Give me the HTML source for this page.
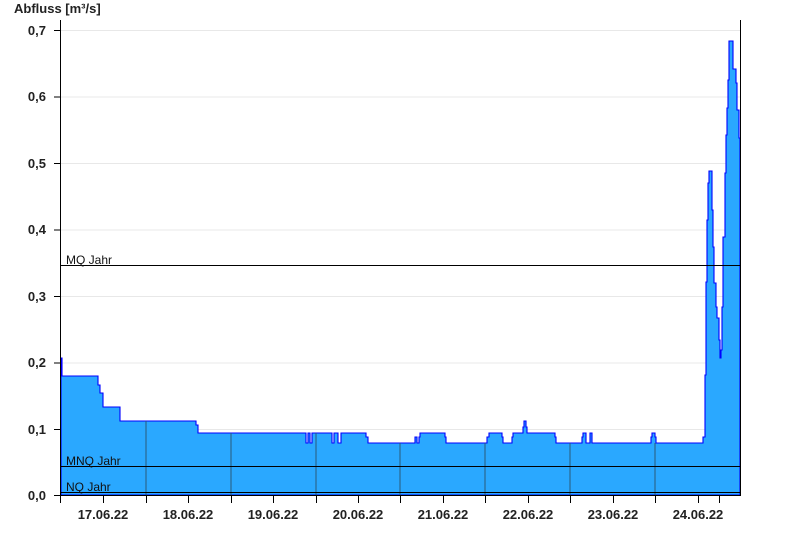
<!DOCTYPE html>
<html><head><meta charset="utf-8"><style>
html,body{margin:0;padding:0;background:#fff;width:800px;height:550px;overflow:hidden}
svg{display:block}
text{font-family:"Liberation Sans",Arial,sans-serif}
</style></head><body>
<svg width="800" height="550" viewBox="0 0 800 550">
<g stroke="#e8e8e8" stroke-width="1">
<line x1="61" y1="30.5" x2="740" y2="30.5"/>
<line x1="61" y1="97" x2="740" y2="97"/>
<line x1="61" y1="163.5" x2="740" y2="163.5"/>
<line x1="61" y1="230" x2="740" y2="230"/>
<line x1="61" y1="296.5" x2="740" y2="296.5"/>
<line x1="61" y1="363" x2="740" y2="363"/>
<line x1="61" y1="429.5" x2="740" y2="429.5"/>
</g>
<path fill="#2aa8ff" stroke="#0000ff" stroke-width="1.1" stroke-linejoin="miter" d="M61,495 L61,358 L62,358 L62,376 L98,376 L98,385 L100,385 L100,393 L103,393 L103,407 L120,407 L120,421 L196,421 L196,425 L198,425 L198,433 L306,433 L306,443 L308,443 L308,433 L310,433 L310,443 L312,443 L312,433 L332,433 L332,443 L334,443 L334,433 L338,433 L338,443 L341,443 L341,433 L343,433 L343,433 L366,433 L366,437 L368,437 L368,443 L415,443 L415,437 L417,437 L417,443 L419,443 L419,437 L420,437 L420,433 L445,433 L445,437 L446,437 L446,443 L487,443 L487,437 L489,437 L489,433 L502,433 L502,437 L503,437 L503,443 L512,443 L512,437 L513,437 L513,433 L523,433 L523,427 L524,427 L524,421 L526,421 L526,427 L527,427 L527,433 L555,433 L555,437 L556,437 L556,443 L582,443 L582,437 L583,437 L583,433 L586,433 L586,443 L590,443 L590,433 L592,433 L592,443 L651,443 L651,437 L652,437 L652,433 L655,433 L655,437 L656,437 L656,443 L703,443 L703,437 L705,437 L705,375 L706,375 L706,282 L707,282 L707,220 L708,220 L708,183 L709,183 L709,171 L712,171 L712,210 L713,210 L713,247 L714,247 L714,283 L716,283 L716,307 L717,307 L717,318 L719,318 L719,340 L720,340 L720,358 L721,358 L721,350 L722,350 L722,307 L723,307 L723,237 L725,237 L725,173 L726,173 L726,135 L727,135 L727,108 L728,108 L728,80 L729,80 L729,41 L733,41 L733,69 L736,69 L736,83 L737,83 L737,110 L739,110 L739,138 L740,138 L740,495 Z"/>
<g stroke="#2a5a7a" stroke-width="1">
<line x1="146" y1="421" x2="146" y2="495"/>
<line x1="231" y1="433" x2="231" y2="495"/>
<line x1="316" y1="433" x2="316" y2="495"/>
<line x1="400" y1="443" x2="400" y2="495"/>
<line x1="485" y1="443" x2="485" y2="495"/>
<line x1="570" y1="443" x2="570" y2="495"/>
<line x1="655" y1="443" x2="655" y2="495"/>
</g>
<g stroke="#000" stroke-width="1">
<line x1="61" y1="265.5" x2="740" y2="265.5"/>
<line x1="61" y1="466.5" x2="740" y2="466.5"/>
<line x1="61" y1="492.5" x2="740" y2="492.5"/>
<line x1="60.5" y1="20" x2="60.5" y2="503"/>
<line x1="740.5" y1="20" x2="740.5" y2="495"/>
<line x1="54" y1="495.5" x2="741" y2="495.5"/>
</g>
<g stroke="#000" stroke-width="1">
<line x1="54" y1="30.5" x2="60" y2="30.5"/><line x1="54" y1="97" x2="60" y2="97"/><line x1="54" y1="163.5" x2="60" y2="163.5"/><line x1="54" y1="230" x2="60" y2="230"/><line x1="54" y1="296.5" x2="60" y2="296.5"/><line x1="54" y1="363" x2="60" y2="363"/><line x1="54" y1="429.5" x2="60" y2="429.5"/>
<line x1="103.5" y1="496" x2="103.5" y2="503"/><line x1="146.5" y1="496" x2="146.5" y2="503"/><line x1="188.5" y1="496" x2="188.5" y2="503"/><line x1="231.5" y1="496" x2="231.5" y2="503"/><line x1="273.5" y1="496" x2="273.5" y2="503"/><line x1="316.5" y1="496" x2="316.5" y2="503"/><line x1="358.5" y1="496" x2="358.5" y2="503"/><line x1="400.5" y1="496" x2="400.5" y2="503"/><line x1="443.5" y1="496" x2="443.5" y2="503"/><line x1="485.5" y1="496" x2="485.5" y2="503"/><line x1="528.5" y1="496" x2="528.5" y2="503"/><line x1="570.5" y1="496" x2="570.5" y2="503"/><line x1="613.5" y1="496" x2="613.5" y2="503"/><line x1="655.5" y1="496" x2="655.5" y2="503"/><line x1="698.5" y1="496" x2="698.5" y2="503"/><line x1="719.5" y1="496" x2="719.5" y2="503"/>
</g>
<g font-size="13" font-weight="bold" fill="#222" text-anchor="end">
<text x="46" y="35">0,7</text><text x="46" y="101">0,6</text><text x="46" y="168">0,5</text><text x="46" y="234">0,4</text><text x="46" y="301">0,3</text><text x="46" y="367">0,2</text><text x="46" y="434">0,1</text><text x="46" y="500">0,0</text>
</g>
<g font-size="13" font-weight="bold" fill="#222" text-anchor="middle">
<text x="103" y="519">17.06.22</text><text x="188" y="519">18.06.22</text><text x="273" y="519">19.06.22</text><text x="358" y="519">20.06.22</text><text x="443" y="519">21.06.22</text><text x="528" y="519">22.06.22</text><text x="613" y="519">23.06.22</text><text x="698" y="519">24.06.22</text>
</g>
<text x="14" y="13" font-size="13" font-weight="bold" fill="#222">Abfluss [m³/s]</text>
<g font-size="12" fill="#111">
<text x="66" y="264">MQ Jahr</text><text x="66" y="465">MNQ Jahr</text><text x="66" y="491">NQ Jahr</text>
</g>
</svg>
</body></html>
